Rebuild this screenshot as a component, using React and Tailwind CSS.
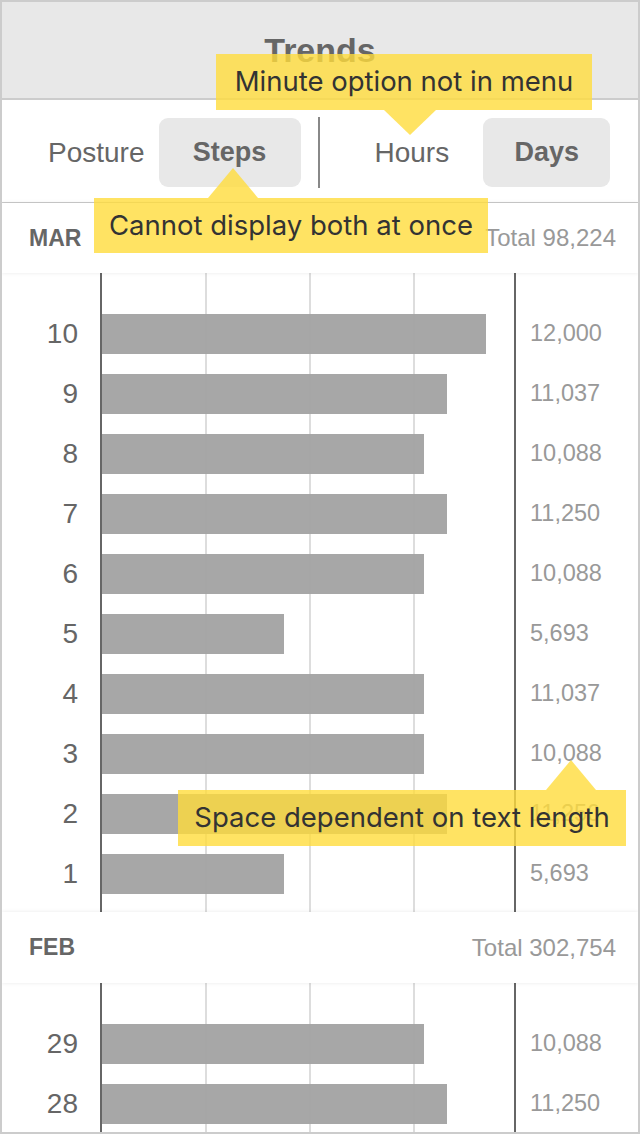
const march = [
  { day: 10, value: '12,000', w: 384 },
  { day: 9, value: '11,037', w: 345 },
  { day: 8, value: '10,088', w: 322 },
  { day: 7, value: '11,250', w: 345 },
  { day: 6, value: '10,088', w: 322 },
  { day: 5, value: '5,693', w: 182 },
  { day: 4, value: '11,037', w: 322 },
  { day: 3, value: '10,088', w: 322 },
  { day: 2, value: '11,250', w: 345 },
  { day: 1, value: '5,693', w: 182 },
];

const feb = [
  { day: 29, value: '10,088', w: 322 },
  { day: 28, value: '11,250', w: 345 },
];

const NOTE_FILL = 'rgba(255,220,60,0.8)';

function Note({ text, box, arrow }) {
  return (
    <div className="absolute z-30 pointer-events-none" style={{ left: box.x, top: box.y }}>
      <div
        className="flex items-center justify-center text-[27.5px] text-[#333] font-['Inter',sans-serif] whitespace-nowrap"
        style={{ width: box.w, height: box.h, background: NOTE_FILL }}
      >
        {text}
      </div>
      <svg
        className="absolute"
        width="60"
        height="32"
        style={{ left: arrow.x - 30, top: arrow.up ? -30 : box.h }}
        viewBox="0 0 60 32"
      >
        {arrow.up ? (
          <polygon points="5,30 55,30 30,0" fill={NOTE_FILL} />
        ) : (
          <polygon points="4,0 56,0 30,25" fill={NOTE_FILL} />
        )}
      </svg>
    </div>
  );
}

function MonthHeader({ name, total, h }) {
  return (
    <div
      className="relative z-10 flex items-center justify-between pl-[27px] pr-[22px] bg-white shadow-[0_0_4px_rgba(0,0,0,0.09)]"
      style={{ height: h }}
    >
      <span className="text-[23px] font-bold text-[#666]">{name}</span>
      <span className="text-[24px] text-[#999]">Total {total}</span>
    </div>
  );
}

function Chart({ rows, top, bottom }) {
  return (
    <div className="flex">
      <div className="w-[98px] flex flex-col" style={{ paddingTop: top, paddingBottom: bottom }}>
        {rows.map((r) => (
          <div key={r.day} className="h-[60px] flex items-center justify-end pr-[22px] text-[28px] text-[#666]">
            {r.day}
          </div>
        ))}
      </div>
      <div
        className="relative w-[416px] border-x-2 border-[#666] flex flex-col"
        style={{ paddingTop: top, paddingBottom: bottom }}
      >
        <div className="absolute top-0 bottom-0 left-[103px] w-[2px] bg-[#ddd]" />
        <div className="absolute top-0 bottom-0 left-[207px] w-[2px] bg-[#ddd]" />
        <div className="absolute top-0 bottom-0 left-[311px] w-[2px] bg-[#ddd]" />
        {rows.map((r) => (
          <div key={r.day} className="h-[60px] flex items-center">
            <div className="relative h-[40px] bg-[#a2a2a2]/95" style={{ width: r.w }} />
          </div>
        ))}
      </div>
      <div className="flex-1 flex flex-col pl-[14px]" style={{ paddingTop: top, paddingBottom: bottom }}>
        {rows.map((r) => (
          <div key={r.day} className="h-[60px] flex items-center text-[23.5px] text-[#999]">
            {r.value}
          </div>
        ))}
      </div>
    </div>
  );
}

export default function App() {
  return (
    <div className="relative w-[640px] h-[1134px] overflow-hidden bg-white border-2 border-[#ccc] font-['Liberation_Sans',Arial,sans-serif]">
      <div className="h-[98px] bg-[#e8e8e8] border-b-2 border-[#ccc] flex items-center justify-center">
        <span className="text-[34px] font-bold text-[#666]">Trends</span>
      </div>

      <div className="h-[103px] pt-[3px] border-b border-[#ccc] flex items-center">
        <span className="ml-[46px] text-[28px] text-[#666]">Posture</span>
        <div className="ml-[14px] w-[142px] h-[69px] rounded-[9px] bg-[#e8e8e8] flex items-center justify-center text-[27px] font-bold text-[#666]">
          Steps
        </div>
        <div className="ml-[17px] w-[2px] h-[71px] bg-[#888]" />
        <span className="ml-[55px] text-[28px] text-[#666]">Hours</span>
        <div className="ml-[34px] w-[127px] h-[69px] rounded-[9px] bg-[#e8e8e8] flex items-center justify-center text-[27px] font-bold text-[#666]">
          Days
        </div>
      </div>

      <MonthHeader name="MAR" total="98,224" h={70} />
      <Chart rows={march} top={31} bottom={8} />
      <MonthHeader name="FEB" total="302,754" h={71} />
      <Chart rows={feb} top={31} bottom={20} />

      <Note text="Minute option not in menu" box={{ x: 214, y: 52, w: 376, h: 56 }} arrow={{ x: 194 }} />
      <Note text="Cannot display both at once" box={{ x: 92, y: 196, w: 394, h: 55 }} arrow={{ x: 139, up: true }} />
      <Note text="Space dependent on text length" box={{ x: 176, y: 788, w: 448, h: 56 }} arrow={{ x: 393, up: true }} />
    </div>
  );
}
